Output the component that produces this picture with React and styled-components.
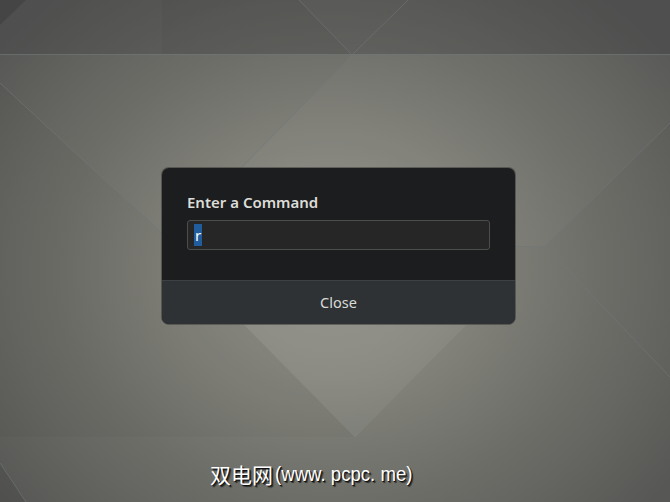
import React from "react";
import styled, { createGlobalStyle } from "styled-components";

const Global = createGlobalStyle`
  html, body {
    margin: 0;
    padding: 0;
    width: 670px;
    height: 502px;
    overflow: hidden;
  }
`;

const Desktop = styled.div`
  position: relative;
  width: 670px;
  height: 502px;
  overflow: hidden;
  background: radial-gradient(
    ellipse 420px 360px at 330px 270px,
    #93938b 0%,
    #85857d 30%,
    #6d6d68 65%,
    #575855 100%
  );
  display: flex;
  flex-direction: column;
  align-items: flex-start;
`;

const Facets = styled.svg`
  position: absolute;
  inset: 0;
  width: 670px;
  height: 502px;
  pointer-events: none;
`;

const Dialog = styled.div`
  position: relative;
  margin: 168px 0 0 162px;
  width: 353px;
  border-radius: 7px;
  overflow: hidden;
  background: #1c1d1e;
  box-shadow: 0 0 0 1px rgba(20, 20, 20, 0.35);
  font-family: "Noto Sans", "Open Sans", sans-serif;
`;

const Body = styled.div`
  padding: 25px 25px 30px 25px;
  display: flex;
  flex-direction: column;
  gap: 9px;
`;

const Title = styled.div`
  font-size: 15px;
  font-weight: 600;
  color: #dcdcd8;
  line-height: 18px;
`;

const Entry = styled.div`
  height: 28px;
  border: 1px solid #4b4d4d;
  border-radius: 3px;
  background: #262626;
  display: flex;
  align-items: center;
  padding-left: 6px;
`;

const Selected = styled.span`
  background: #215d9c;
  color: #ffffff;
  font-size: 15px;
  line-height: 22px;
  padding: 0 1px;
`;

const Footer = styled.div`
  height: 44px;
  border-top: 1px solid #3b4144;
  background: #2e3235;
  display: flex;
  align-items: center;
  justify-content: center;
  padding-bottom: 2px;
  box-sizing: border-box;
  font-size: 14.5px;
  color: #dadad6;
`;

const Watermark = styled.div`
  position: relative;
  margin: 137px 0 0 210px;
  display: flex;
  align-items: center;
  color: #ffffff;
  text-shadow: 1px 1px 0 #111, 2px 2px 1px rgba(0, 0, 0, 0.6);
  white-space: nowrap;
`;

const Han = styled.span`
  font-family: "Noto Sans CJK SC", sans-serif;
  font-size: 21px;
  line-height: 26px;
`;

const Latin = styled.span`
  display: inline-block;
  margin-left: 2px;
  font-family: "Liberation Sans", sans-serif;
  font-size: 20px;
  line-height: 26px;
  transform: scaleX(0.93);
  transform-origin: left center;
`;

export default function App() {
  return (
    <>
      <Global />
      <Desktop>
        <Facets viewBox="0 0 670 502">
          <rect x="0" y="0" width="670" height="54" fill="#3c3d3e" opacity="0.3" />
          <polygon points="162,0 299,0 352,55 162,54" fill="#000" opacity="0.03" />
          <polygon points="0,0 26,0 0,25" fill="#000" opacity="0.12" />
          <polygon points="244,325 466,325 355,437" fill="#fff" opacity="0.05" />
          <polygon points="352,55 241,168 515,168 515,246 545,246 670,123 670,54" fill="#fff" opacity="0.025" />
          <polygon points="0,83 162,233 162,325 244,325 355,437 0,437" fill="#000" opacity="0.025" />
          <polygon points="0,463 26,502 0,502" fill="#000" opacity="0.08" />
          <g stroke="#6f787b" strokeWidth="1" fill="none" opacity="0.6">
            <line x1="0" y1="54.5" x2="670" y2="54.5" />
            <line x1="0" y1="83" x2="162" y2="233" />
            <line x1="352" y1="55" x2="241" y2="168" />
            <line x1="299" y1="0" x2="352" y2="55" />
            <line x1="408" y1="0" x2="352" y2="55" />
            <line x1="670" y1="123" x2="545" y2="246" />
            <line x1="515" y1="246.5" x2="545" y2="246.5" />
            <line x1="545" y1="246" x2="670" y2="377" />
            <line x1="0" y1="463" x2="26" y2="502" />
          </g>
          <g stroke="#8c8c86" strokeWidth="1" fill="none" opacity="0.3">
            <line x1="244" y1="325" x2="355" y2="437" />
            <line x1="466" y1="325" x2="355" y2="437" />
          </g>
        </Facets>
        <Dialog>
          <Body>
            <Title>Enter a Command</Title>
            <Entry>
              <Selected>r</Selected>
            </Entry>
          </Body>
          <Footer>Close</Footer>
        </Dialog>
        <Watermark>
          <Han>双电网</Han>
          <Latin>(www. pcpc. me)</Latin>
        </Watermark>
      </Desktop>
    </>
  );
}
